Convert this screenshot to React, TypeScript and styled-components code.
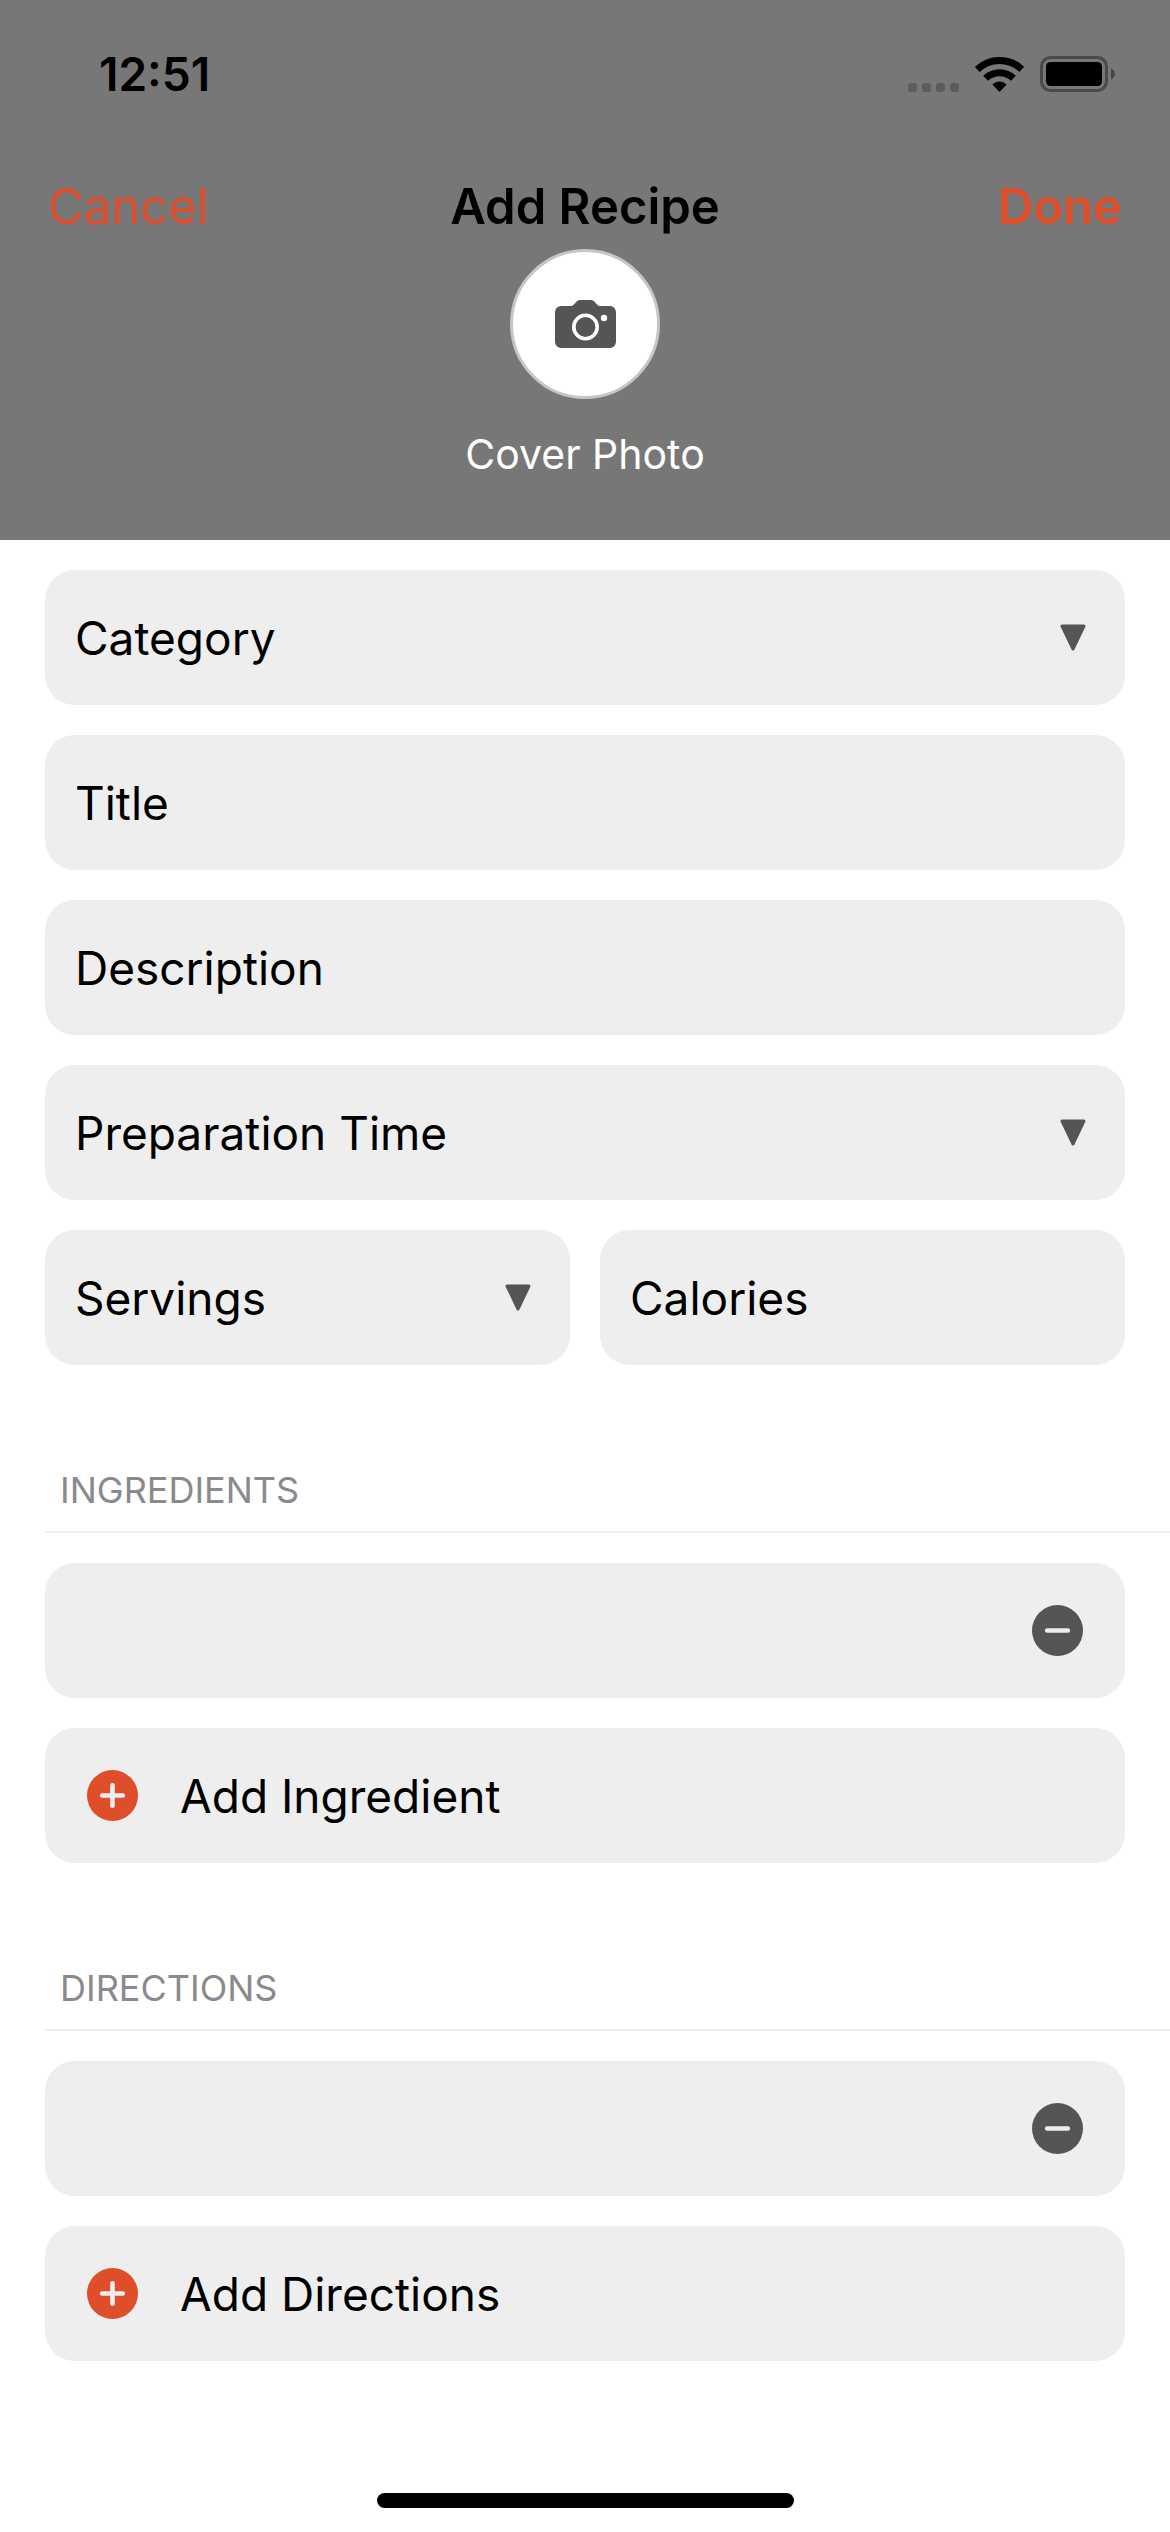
import React from "react";
import styled, { createGlobalStyle } from "styled-components";

const colors = {
  accent: "#de4e2b",
  header: "#777777",
  field: "#eeeeee",
  icon: "#555555",
  muted: "#8a8a8e",
};

const GlobalStyle = createGlobalStyle`
  *, *::before, *::after { box-sizing: border-box; }
  body {
    margin: 0;
    background: #ffffff;
    color: #000000;
    font-family: Inter, "Liberation Sans", sans-serif;
  }
  button, input, select {
    margin: 0;
    padding: 0;
    border: 0;
    background: none;
    color: inherit;
    font: inherit;
  }
`;

const Screen = styled.main`
  display: flex;
  flex-direction: column;
  min-height: 100vh;
`;

const Header = styled.header`
  background: ${colors.header};
`;

const StatusBar = styled.div`
  display: flex;
  align-items: center;
  justify-content: space-between;
  height: 147px;
  padding: 0 54px 0 99px;
`;

const Clock = styled.time`
  font-size: 46px;
  font-weight: 600;
  line-height: 60px;
`;

const StatusIcons = styled.div`
  display: flex;
  align-items: center;
  gap: 16px;
`;

const NavBar = styled.nav`
  display: grid;
  grid-template-columns: 1fr auto 1fr;
  align-items: center;
  padding: 30px 48px 12px;
  font-size: 49px;
  line-height: 60px;
`;

const NavButton = styled.button<{ $side: "start" | "end" }>`
  justify-self: ${(p) => p.$side};
  color: ${colors.accent};
  font-weight: ${(p) => (p.$side === "end" ? 600 : 400)};
`;

const NavTitle = styled.h1`
  margin: 0;
  font-size: inherit;
  font-weight: 600;
`;

const Cover = styled.div`
  display: flex;
  flex-direction: column;
  align-items: center;
  gap: 30px;
  padding-bottom: 60px;
`;

const CoverButton = styled.button`
  display: grid;
  place-items: center;
  width: 150px;
  height: 150px;
  border: 3px solid #c6c6c8;
  border-radius: 50%;
  background: #ffffff;
`;

const CoverLabel = styled.span`
  color: #ffffff;
  font-size: 41px;
  line-height: 51px;
`;

const Form = styled.form`
  display: flex;
  flex-direction: column;
  gap: 104px;
  padding-top: 30px;
`;

const Fields = styled.div`
  display: grid;
  grid-template-columns: 1fr 1fr;
  gap: 30px;
  padding: 0 45px;
`;

const Field = styled.div<{ $half?: boolean }>`
  display: grid;
  grid-template-columns: 1fr auto;
  align-items: center;
  grid-column: ${(p) => (p.$half ? "auto" : "1 / -1")};
  height: 135px;
  border-radius: 30px;
  background: ${colors.field};
  font-size: 46px;
`;

const TextBox = styled.input`
  grid-area: 1 / 1 / 2 / 2;
  width: 100%;
  height: 100%;
  padding: 0 30px;
  border-radius: 30px;
  &::placeholder {
    color: #000000;
    opacity: 1;
  }
`;

const Picker = styled.select`
  grid-area: 1 / 1 / 2 / 3;
  width: 100%;
  height: 100%;
  padding: 0 90px 0 30px;
  border-radius: 30px;
  appearance: none;
`;

const PickerArrow = styled.svg`
  grid-area: 1 / 2 / 2 / 3;
  margin-right: 39px;
  pointer-events: none;
`;

const RemoveButton = styled.button`
  display: flex;
  margin-right: 42px;
`;

const AddButton = styled.button`
  display: flex;
  align-items: center;
  grid-column: 1 / -1;
  gap: 42px;
  height: 135px;
  padding: 0 42px;
  border-radius: 30px;
  background: ${colors.field};
  font-size: 46px;
`;

const Section = styled.section`
  display: flex;
  flex-direction: column;
  gap: 30px;
`;

const SectionTitle = styled.h2`
  margin: 0 0 0 45px;
  padding: 0 15px 20px;
  border-bottom: 2px solid ${colors.field};
  color: ${colors.muted};
  font-size: 36px;
  font-weight: 400;
  line-height: 42px;
  text-transform: uppercase;
`;

const HomeArea = styled.footer`
  display: flex;
  justify-content: center;
  margin-top: auto;
  padding: 48px 0 24px;
`;

const HomeIndicator = styled.div`
  width: 417px;
  height: 15px;
  border-radius: 8px;
  background: #000000;
`;

function SignalIcon() {
  return (
    <svg width="51" height="36" viewBox="0 0 51 36" fill="#5c5c5c" aria-hidden="true">
      {[0, 14, 28, 42].map((x) => (
        <rect key={x} x={x} y="27" width="9" height="9" rx="3" />
      ))}
    </svg>
  );
}

function WifiIcon() {
  return (
    <svg width="49" height="36" viewBox="0 0 49 36" aria-hidden="true">
      <path d="M24.5 36 L17.3 28.5 A10.4 10.4 0 0 1 31.7 28.5 Z" />
      <path d="M10.6 22.3 A20 20 0 0 1 38.4 22.3" fill="none" stroke="#000" strokeWidth="7" />
      <path d="M2.2 13.4 A32.2 32.2 0 0 1 46.8 13.4" fill="none" stroke="#000" strokeWidth="7" />
    </svg>
  );
}

function BatteryIcon() {
  return (
    <svg width="76" height="36" viewBox="0 0 76 36" aria-hidden="true">
      <rect x="1.5" y="1.5" width="65" height="33" rx="9" fill="none" stroke="#4a4a4a" strokeWidth="3" />
      <rect x="6" y="6" width="56" height="24" rx="4.5" />
      <path d="M71 12.5 C76 14.5 76 21.5 71 23.5 Z" fill="#454545" />
    </svg>
  );
}

function CameraIcon() {
  return (
    <svg width="61" height="48" viewBox="0 0 61 48" aria-hidden="true">
      <path
        fill={colors.icon}
        d="M7 6 H15 C17 6 18 5.6 19.2 4.2 L21.2 2 C22.6 .5 23.6 0 25.6 0 H35.4 C37.4 0 38.4 .5 39.8 2 L41.8 4.2 C43 5.6 44 6 46 6 H54 C58.5 6 61 8.5 61 13 V41 C61 45.5 58.5 48 54 48 H7 C2.5 48 0 45.5 0 41 V13 C0 8.5 2.5 6 7 6 Z"
      />
      <circle cx="30.5" cy="27" r="11.7" fill="none" stroke="#fff" strokeWidth="3.6" />
      <circle cx="49" cy="18" r="3.2" fill="#fff" />
    </svg>
  );
}

function Arrow() {
  return (
    <PickerArrow width="26" height="28" viewBox="0 0 26 28" aria-hidden="true">
      <path
        d="M2 2 H24 L13 25 Z"
        fill={colors.icon}
        stroke={colors.icon}
        strokeWidth="3"
        strokeLinejoin="round"
      />
    </PickerArrow>
  );
}

function CircleIcon({ kind }: { kind: "plus" | "minus" }) {
  return (
    <svg width="51" height="51" viewBox="0 0 51 51" aria-hidden="true">
      <circle cx="25.5" cy="25.5" r="25.5" fill={kind === "plus" ? colors.accent : colors.icon} />
      <path
        d={kind === "plus" ? "M15.2 25.5 H35.8 M25.5 15.2 V35.8" : "M15.2 25.5 H35.8"}
        stroke={colors.field}
        strokeWidth="4.6"
        strokeLinecap="round"
      />
    </svg>
  );
}

function PickerField({ label, options, half }: { label: string; options: string[]; half?: boolean }) {
  return (
    <Field $half={half}>
      <Picker aria-label={label} defaultValue="">
        <option value="">{label}</option>
        {options.map((option) => (
          <option key={option}>{option}</option>
        ))}
      </Picker>
      <Arrow />
    </Field>
  );
}

function TextField({ label, half }: { label: string; half?: boolean }) {
  return (
    <Field $half={half}>
      <TextBox type="text" aria-label={label} placeholder={label} />
    </Field>
  );
}

function ListSection({ title, item, action }: { title: string; item: string; action: string }) {
  return (
    <Section>
      <SectionTitle>{title}</SectionTitle>
      <Fields>
        <Field>
          <TextBox type="text" aria-label={item} />
          <RemoveButton type="button" aria-label={`Remove ${item}`}>
            <CircleIcon kind="minus" />
          </RemoveButton>
        </Field>
        <AddButton type="button">
          <CircleIcon kind="plus" />
          {action}
        </AddButton>
      </Fields>
    </Section>
  );
}

export default function App() {
  return (
    <>
      <GlobalStyle />
      <Screen>
        <Header>
          <StatusBar>
            <Clock>12:51</Clock>
            <StatusIcons>
              <SignalIcon />
              <WifiIcon />
              <BatteryIcon />
            </StatusIcons>
          </StatusBar>
          <NavBar>
            <NavButton type="button" $side="start">Cancel</NavButton>
            <NavTitle>Add Recipe</NavTitle>
            <NavButton type="button" $side="end">Done</NavButton>
          </NavBar>
          <Cover>
            <CoverButton type="button" aria-labelledby="cover-label">
              <CameraIcon />
            </CoverButton>
            <CoverLabel id="cover-label">Cover Photo</CoverLabel>
          </Cover>
        </Header>
        <Form>
          <Fields>
            <PickerField label="Category" options={["Breakfast", "Lunch", "Dinner", "Dessert"]} />
            <TextField label="Title" />
            <TextField label="Description" />
            <PickerField label="Preparation Time" options={["15 min", "30 min", "45 min", "60 min"]} />
            <PickerField label="Servings" options={["1", "2", "4", "6"]} half />
            <TextField label="Calories" half />
          </Fields>
          <ListSection title="Ingredients" item="Ingredient" action="Add Ingredient" />
          <ListSection title="Directions" item="Direction" action="Add Directions" />
        </Form>
        <HomeArea>
          <HomeIndicator />
        </HomeArea>
      </Screen>
    </>
  );
}
